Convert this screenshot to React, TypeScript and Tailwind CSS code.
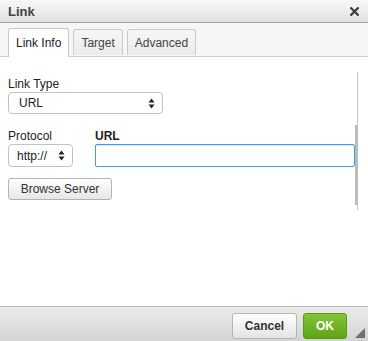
import React from "react";

const Arrows = () => (
  <svg width="7" height="11" viewBox="0 0 7 11" className="shrink-0">
    <path d="M3.5 0.5 L6.5 4.5 L0.5 4.5 Z" fill="#222" />
    <path d="M3.5 10.5 L6.5 6.5 L0.5 6.5 Z" fill="#222" />
  </svg>
);

export default function App() {
  return (
    <div
      className="w-[368px] h-[341px] flex flex-col bg-white overflow-hidden text-[12px] text-[#222]"
      style={{ fontFamily: '"Liberation Sans", Arial, sans-serif' }}
    >
      {/* Title bar */}
      <div className="h-[23px] shrink-0 flex items-center justify-between pl-[8px] pr-[9px] border-b border-[#a3a3a3] bg-gradient-to-b from-[#f7f7f7] to-[#e2e2e2]">
        <span className="font-bold text-[13px] text-[#444] leading-none">Link</span>
        <svg width="9" height="9" viewBox="0 0 9 9">
          <path d="M1.2 1.2 L7.8 7.8 M7.8 1.2 L1.2 7.8" stroke="#3a3a3a" strokeWidth="2.2" strokeLinecap="square" />
        </svg>
      </div>

      {/* Tabs */}
      <div className="h-[34px] shrink-0 flex items-end gap-[4px] pl-[8px] bg-[#f6f6f6] border-b border-[#d0d0d0]">
        <div className="h-[29px] -mb-px px-[7px] flex items-center bg-white border border-[#c9c9c9] border-b-0 rounded-t-[3px] text-[#222]">
          Link Info
        </div>
        <div className="h-[26px] mb-[1px] px-[7px] flex items-center bg-gradient-to-b from-[#f6f6f6] to-[#ebebeb] border border-[#c9c9c9] border-b-0 rounded-t-[3px] text-[#444]">
          Target
        </div>
        <div className="h-[26px] mb-[1px] px-[7px] flex items-center bg-gradient-to-b from-[#f6f6f6] to-[#ebebeb] border border-[#c9c9c9] border-b-0 rounded-t-[3px] text-[#444]">
          Advanced
        </div>
      </div>

      {/* Content */}
      <div className="relative flex-1 bg-white pl-[8px] pt-[20px]">
        <div className="leading-[15px] h-[15px]">Link Type</div>
        <div className="w-[155px] h-[22px] flex items-center justify-between pl-[10px] pr-[7px] border border-[#c3c3c3] rounded-[4px] bg-white">
          <span>URL</span>
          <Arrows />
        </div>

        <div className="mt-[15px] flex gap-[22px]">
          <div className="flex flex-col">
            <div className="leading-[15px] h-[15px]">Protocol</div>
            <div className="w-[65px] h-[23px] flex items-center justify-between pl-[8px] pr-[7px] border border-[#c3c3c3] rounded-[4px] bg-white">
              <span>http://</span>
              <Arrows />
            </div>
          </div>
          <div className="flex flex-col">
            <div className="leading-[15px] h-[15px] font-bold">URL</div>
            <div className="w-[260px] h-[23px] border border-[#3b9de6] rounded-[2px] bg-white shadow-[inset_0_1px_1px_rgba(59,157,230,0.25)]"></div>
          </div>
        </div>

        <div className="mt-[11px] w-[104px] h-[22px] flex items-center justify-center border border-[#b3b3b3] rounded-[3px] bg-gradient-to-b from-[#ffffff] to-[#e6e6e6] text-[#333]">
          Browse Server
        </div>

        {/* scrollbar */}
        <div className="absolute left-[357px] top-[15px] w-px h-[138px] bg-[#c4c4c4]"></div>
        <div className="absolute left-[355px] top-[68px] w-[3px] h-[80px] bg-[#bdbdb6]"></div>
      </div>

      {/* Footer */}
      <div className="relative h-[35px] shrink-0 border-t border-[#bcbcbc] bg-gradient-to-b from-[#ebebeb] to-[#d4d4d4] flex justify-end items-start pt-[6px] pr-[21px] gap-[6px]">
        <div className="w-[65px] h-[26px] flex items-center justify-center border border-[#b5b5b5] rounded-[3px] bg-gradient-to-b from-[#ffffff] to-[#e4e4e4] font-bold text-[#333]">
          Cancel
        </div>
        <div className="w-[44px] h-[26px] flex items-center justify-center border border-[#5a9a12] rounded-[3px] bg-gradient-to-b from-[#84c23a] to-[#5ea512] font-bold text-white">
          OK
        </div>
        <svg className="absolute right-[3px] bottom-[3px]" width="10" height="10" viewBox="0 0 10 10">
          <path d="M10 0 L10 10 L0 10 Z" fill="#6f6f6f" />
        </svg>
      </div>
    </div>
  );
}
